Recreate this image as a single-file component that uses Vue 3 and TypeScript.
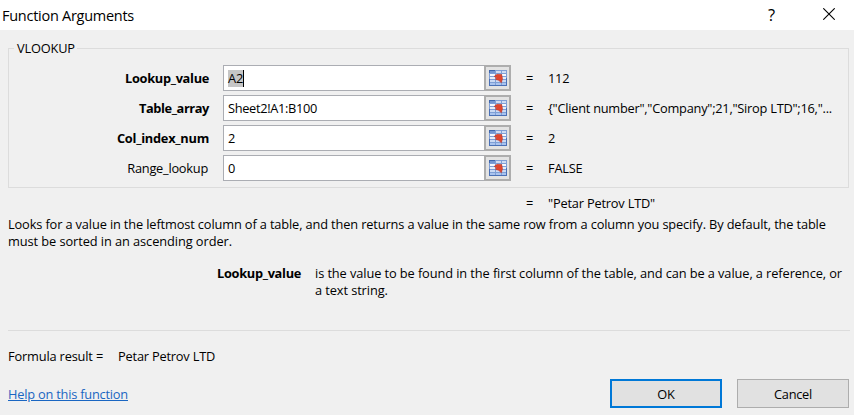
<script setup lang="ts">
interface Argument {
  name: string
  value: string
  result: string
  required: boolean
  key: string
  active?: boolean
}

const args: Argument[] = [
  { name: 'Lookup_value', value: 'A2', result: '112', required: true, key: 'lookup', active: true },
  { name: 'Table_array', value: 'Sheet2!A1:B100', result: '{"Client number","Company";21,"Sirop LTD";16,"...', required: true, key: 'table' },
  { name: 'Col_index_num', value: '2', result: '2', required: true, key: 'col' },
  { name: 'Range_lookup', value: '0', result: 'FALSE', required: false, key: 'range' },
]
</script>

<template>
  <div class="dialog">
    <header class="titlebar">
      <span class="title">Function Arguments</span>
      <span class="help-mark">?</span>
      <svg class="close" width="12" height="12" viewBox="0 0 12 12">
        <path d="M.3.3l11.4 11.4M11.7.3L.3 11.7" stroke="#000" stroke-width="1.1" fill="none" />
      </svg>
    </header>

    <section class="group">
      <div class="legend">
        <i class="stub"></i><span>VLOOKUP</span><i class="rule"></i>
      </div>
      <div class="rows">
        <div v-for="a in args" :key="a.key" class="row" :class="a.key">
          <span class="name" :class="{ required: a.required }">{{ a.name }}</span>
          <div class="field">
            <div class="input"><span :class="{ selected: a.active }">{{ a.value }}</span></div>
            <div class="picker">
              <svg width="18" height="16" viewBox="0 0 18 16">
                <rect width="18" height="16" fill="#7f9fd6" />
                <path fill="#3f66ab" d="M0 0h6v1H0zM0 1h1v2H0z" />
                <path fill="#7396d2" d="M1 1h5v2H1z" />
                <path fill="#cfdcf3" d="M7 1h5v2H7zM13 1h4v2h-4z" />
                <path fill="#f6f9ff" d="M1 4h5v2H1zM7 4h5v2H7zM13 4h4v2h-4z" />
                <path fill="#e6eefb" d="M1 7h5v2H1zM7 7h5v2H7zM13 7h4v2h-4z" />
                <path fill="#cbdaf4" d="M1 10h5v2H1zM7 10h5v2H7zM13 10h4v2h-4z" />
                <path fill="#a9c3ee" d="M1 13h5v2H1zM7 13h5v2H7zM13 13h4v2h-4z" />
                <path fill="#4a70b6" d="M0 15h18v1H0zM17 8h1v8h-1zM0 9h1v7H0z" />
                <path fill="#e0472f" stroke="#bf3826" stroke-width=".6" stroke-linejoin="round" d="M5.2 6.4L8 4.3l4.6.2.9 4.2-1.2 4.1-2.6-2.6-3.2-.8 1-1.6z" />
              </svg>
            </div>
          </div>
          <span class="eq">=</span>
          <span class="result">{{ a.result }}</span>
        </div>
      </div>
    </section>

    <div class="outcome"><span class="eq">=</span><span class="result">"Petar Petrov LTD"</span></div>

    <p class="description">
      <span class="first">Looks for a value in the leftmost column of a table, and then returns a value in the same row from a column you specify. By default, the table</span><br />
      <span>must be sorted in an ascending order.</span>
    </p>

    <div class="arg-help">
      <strong>Lookup_value</strong>
      <p>is the value to be found in the first column of the table, and can be a value, a reference, or<br />a text string.</p>
    </div>

    <div class="formula"><span>Formula result =</span><span class="final">Petar Petrov LTD</span></div>

    <footer class="footer">
      <a class="link">Help on this function</a>
      <button class="btn primary">OK</button>
      <button class="btn">Cancel</button>
    </footer>
  </div>
</template>

<style>
body { background: #f0f0f0; overflow: hidden; }
</style>

<style scoped>
.dialog {
  box-sizing: border-box;
  width: 854px;
  height: 415px;
  overflow: hidden;
  display: flex;
  flex-direction: column;
  background: #f0f0f0;
  color: #000;
  font: 12.8px/17px "Open Sans", "Noto Sans", sans-serif;
  letter-spacing: -0.2px;
  white-space: nowrap;
}
.titlebar {
  box-sizing: border-box;
  flex: none;
  height: 30px;
  padding: 0 19px 0 2px;
  display: flex;
  align-items: center;
  background: #fff;
}
.title { flex: 1; font-size: 14.5px; letter-spacing: -0.27px; }
.help-mark { width: 8px; margin: -2px 47px 0 0; font-size: 16.5px; }
.close { display: block; margin-top: -2px; }

.group {
  box-sizing: border-box;
  flex: none;
  width: 841px;
  height: 148px;
  margin: 10px 0 0 8px;
  display: flex;
  flex-direction: column;
}
.legend { display: flex; height: 17px; align-items: center; letter-spacing: -0.17px; flex: none; margin-bottom: -9px; }
.stub { width: 6px; height: 1px; background: #dcdcdc; margin-right: 3px; }
.rule { flex: 1; height: 1px; background: #dcdcdc; margin-left: 2px; }
.rows {
  flex: 1;
  border: 1px solid #dcdcdc;
  border-top: 0;
  padding-top: 17px;
  display: flex;
  flex-direction: column;
  gap: 4px;
}
.row { display: flex; align-items: center; height: 26px; flex: none; }
.name { width: 200px; text-align: right; }
.required { font-weight: 700; }
.lookup .name { letter-spacing: -0.305px; }
.table .name { letter-spacing: -0.39px; }
.col .name { letter-spacing: -0.245px; }
.range .name { letter-spacing: -0.24px; padding-right: 1px; width: 199px; }
.table .input { letter-spacing: -0.33px; }
.table .result { letter-spacing: -0.245px; }
.field { display: flex; width: 288px; height: 26px; margin-left: 14px; }
.input {
  box-sizing: border-box;
  width: 261px;
  padding-left: 4px;
  display: flex;
  align-items: center;
  background: #fff;
  border: 1px solid #abadb3;
  border-right: 0;
}
.selected { background: #c6c6c6; border-right: 1px solid #000; height: 17px; }
.picker {
  box-sizing: border-box;
  width: 27px;
  border: 2px solid #adadad;
  background: #e3e3e3;
  display: flex;
  align-items: center;
  justify-content: center;
}
.picker svg { display: block; }
.eq { width: 22px; margin-left: 15px; }
.outcome { display: flex; flex: none; margin: 7px 0 0 511px; }
.outcome .result { letter-spacing: -0.19px; }
.description { margin: 4px 0 0 8px; flex: none; letter-spacing: -0.075px; }
.first { letter-spacing: -0.135px; }
.arg-help { display: flex; flex: none; margin: 15px 0 0 217px; }
.arg-help strong { width: 98px; letter-spacing: -0.305px; }
.arg-help p { margin: 0; letter-spacing: -0.09px; }
.formula {
  flex: none;
  width: 842px;
  margin: 31px 0 0 8px;
  padding-top: 17px;
  border-top: 1px solid #dcdcdc;
  display: flex;
  letter-spacing: -0.165px;
}
.formula .final { margin-left: 15px; letter-spacing: -0.2px; }
.footer { display: flex; align-items: center; flex: none; margin: 14px 5px 0 8px; gap: 15px; }
.link { margin-right: auto; padding-top: 2px; color: #1a66c2; letter-spacing: -0.21px; text-decoration: underline; text-underline-offset: 1px; }
.btn {
  box-sizing: border-box;
  width: 112px;
  height: 29px;
  padding: 2px 0 0;
  border: 1px solid #adadad;
  background: #e1e1e1;
  color: inherit;
  font: inherit;
  letter-spacing: -0.26px;
}
.primary { border: 2px solid #0078d7; }
</style>
